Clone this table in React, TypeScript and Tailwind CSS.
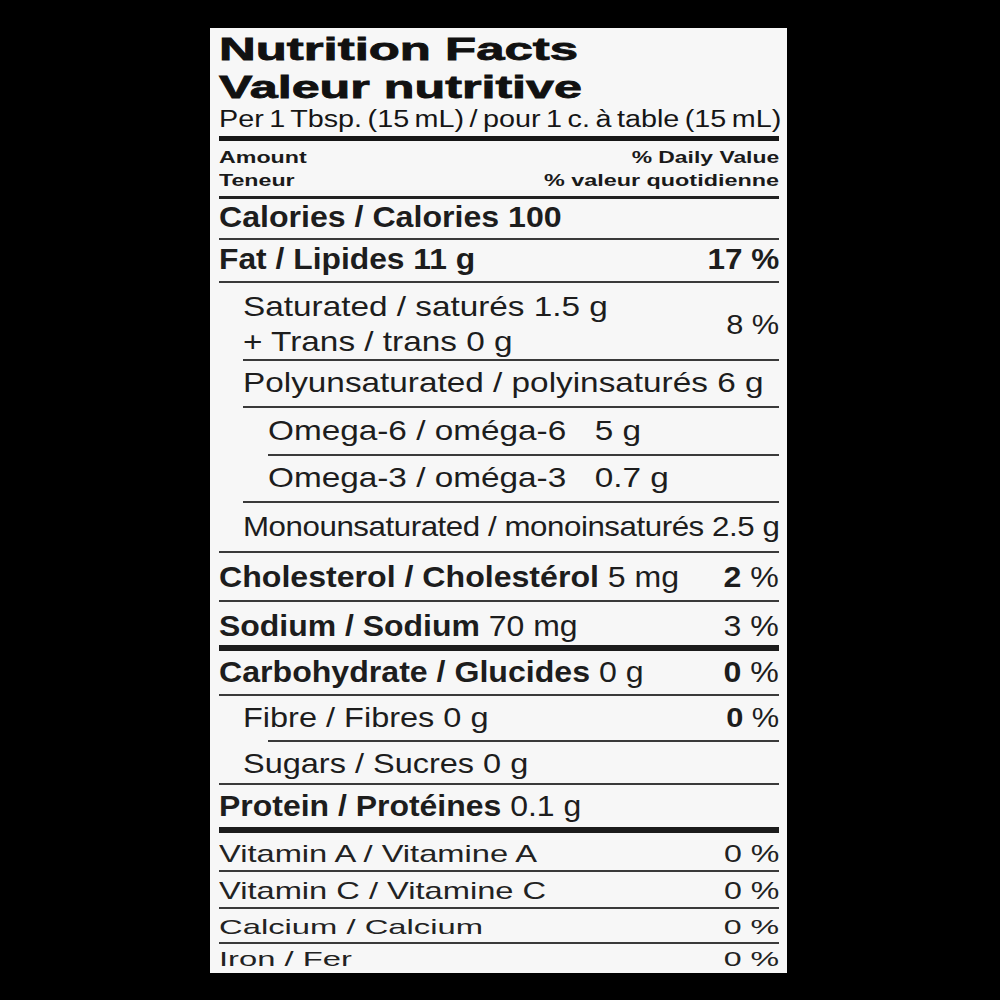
import type { ReactNode } from "react";

// thin divider between rows
function Rule({ className = "" }: { className?: string }) {
  return <div className={`h-[2px] shrink-0 bg-[#3a3a3a] ${className}`} />;
}

function Thick({ className = "" }: { className?: string }) {
  return <div className={`h-[6px] shrink-0 bg-[#1c1c1c] ${className}`} />;
}

// stretched label text, the print on the box is an extended face
function Wide({ scale, children }: { scale: string; children: ReactNode }) {
  return (
    <span className={`inline-block origin-left whitespace-nowrap ${scale}`}>
      {children}
    </span>
  );
}

function WideRight({ scale, children }: { scale: string; children: ReactNode }) {
  return (
    <span className={`inline-block origin-right whitespace-nowrap ${scale}`}>
      {children}
    </span>
  );
}

export default function App() {
  return (
    <div className="h-[1000px] w-[1000px] bg-black pl-[210px] pt-[28px] font-['Liberation_Sans',Arial,sans-serif] text-[#1d1d1d]">
      <div className="flex h-[945px] w-[577px] flex-col overflow-hidden bg-[#f7f7f7] pl-[9px] pr-[8px]">
        {/* Title */}
        <div className="pt-[2px] text-[32px] font-bold leading-[38px] text-[#111] [-webkit-text-stroke:0.8px_#111]">
          <div>
            <Wide scale="scale-x-[1.59]">Nutrition Facts</Wide>
          </div>
          <div>
            <Wide scale="scale-x-[1.57]">Valeur nutritive</Wide>
          </div>
        </div>
        <div className="text-[23px] leading-[26px] text-[#151515] [word-spacing:-2px]">
          <Wide scale="scale-x-[1.25]">Per 1 Tbsp. (15 mL) / pour 1 c. à table (15 mL)</Wide>
        </div>
        <div className="mt-[4px] h-[5px] shrink-0 bg-[#161616]" />

        {/* Amount / Daily value header */}
        <div className="flex h-[55px] shrink-0 justify-between pt-[5px] text-[16px] font-bold leading-[23px] text-[#1a1a1a]">
          <div>
            <div>
              <Wide scale="scale-x-[1.45]">Amount</Wide>
            </div>
            <div>
              <Wide scale="scale-x-[1.45]">Teneur</Wide>
            </div>
          </div>
          <div className="text-right">
            <div>
              <WideRight scale="scale-x-[1.43]">% Daily Value</WideRight>
            </div>
            <div>
              <WideRight scale="scale-x-[1.46]">% valeur quotidienne</WideRight>
            </div>
          </div>
        </div>
        <div className="h-[3px] shrink-0 bg-[#222]" />

        {/* Calories */}
        <div className="h-[39px] shrink-0 pt-[3px] text-[30px] font-bold leading-[30px]">
          <Wide scale="scale-x-[1.07]">Calories / Calories 100</Wide>
        </div>
        <Rule />

        {/* Fat */}
        <div className="flex h-[41px] shrink-0 justify-between pt-[4px] text-[30px] font-bold leading-[30px]">
          <Wide scale="scale-x-[1.06]">Fat / Lipides 11 g</Wide>
          <WideRight scale="scale-x-[1.05]">17 %</WideRight>
        </div>
        <Rule />

        {/* Saturated + Trans */}
        <div className="flex h-[76px] shrink-0 justify-between pl-[24px] pt-[6px] text-[28px] leading-[35px]">
          <div>
            <div>
              <Wide scale="scale-x-[1.19]">Saturated / saturés 1.5 g</Wide>
            </div>
            <div>
              <Wide scale="scale-x-[1.19]">+ Trans / trans 0 g</Wide>
            </div>
          </div>
          <div className="flex items-center">
            <WideRight scale="scale-x-[1.1]">8 %</WideRight>
          </div>
        </div>
        <Rule className="ml-[24px]" />

        {/* Polyunsaturated */}
        <div className="h-[45px] shrink-0 pl-[24px] pt-[8px] text-[28px] leading-[28px]">
          <Wide scale="scale-x-[1.19]">Polyunsaturated / polyinsaturés 6 g</Wide>
        </div>
        <Rule className="ml-[24px]" />

        {/* Omega-6 */}
        <div className="h-[46px] shrink-0 pl-[49px] pt-[9px] text-[28px] leading-[28px]">
          <Wide scale="scale-x-[1.19]">
            Omega-6 / oméga-6<span className="ml-[24px]">5 g</span>
          </Wide>
        </div>
        <Rule className="ml-[49px]" />

        {/* Omega-3 */}
        <div className="h-[45px] shrink-0 pl-[49px] pt-[8px] text-[28px] leading-[28px]">
          <Wide scale="scale-x-[1.19]">
            Omega-3 / oméga-3<span className="ml-[24px]">0.7 g</span>
          </Wide>
        </div>
        <Rule className="ml-[24px]" />

        {/* Monounsaturated */}
        <div className="h-[48px] shrink-0 pl-[24px] pt-[10px] text-[28px] leading-[28px] tracking-[-0.4px]">
          <Wide scale="scale-x-[1.117]">Monounsaturated / monoinsaturés 2.5 g</Wide>
        </div>
        <Rule />

        {/* Cholesterol */}
        <div className="flex h-[47px] shrink-0 justify-between pt-[9px] text-[30px] leading-[30px]">
          <Wide scale="scale-x-[1.07]">
            <span className="font-bold">Cholesterol / Cholestérol</span> 5 mg
          </Wide>
          <WideRight scale="scale-x-[1.07]">
            <span className="font-bold">2</span> %
          </WideRight>
        </div>
        <Rule />

        {/* Sodium */}
        <div className="flex h-[43px] shrink-0 justify-between pt-[9px] text-[30px] leading-[30px]">
          <Wide scale="scale-x-[1.065]">
            <span className="font-bold">Sodium / Sodium</span> 70 mg
          </Wide>
          <WideRight scale="scale-x-[1.07]">3 %</WideRight>
        </div>
        <Thick />

        {/* Carbohydrate */}
        <div className="flex h-[43px] shrink-0 justify-between pt-[6px] text-[30px] leading-[30px]">
          <Wide scale="scale-x-[1.07]">
            <span className="font-bold">Carbohydrate / Glucides</span> 0 g
          </Wide>
          <WideRight scale="scale-x-[1.07]">
            <span className="font-bold">0</span> %
          </WideRight>
        </div>
        <Rule />

        {/* Fibre */}
        <div className="flex h-[44px] shrink-0 justify-between pl-[24px] pt-[8px] text-[28px] leading-[28px]">
          <Wide scale="scale-x-[1.16]">Fibre / Fibres 0 g</Wide>
          <WideRight scale="scale-x-[1.1]">
            <span className="font-bold">0</span> %
          </WideRight>
        </div>
        <Rule className="ml-[49px]" />

        {/* Sugars */}
        <div className="h-[41px] shrink-0 pl-[24px] pt-[8px] text-[28px] leading-[28px]">
          <Wide scale="scale-x-[1.16]">Sugars / Sucres 0 g</Wide>
        </div>
        <Rule />

        {/* Protein */}
        <div className="h-[42px] shrink-0 pt-[6px] text-[30px] leading-[30px]">
          <Wide scale="scale-x-[1.065]">
            <span className="font-bold">Protein / Protéines</span> 0.1 g
          </Wide>
        </div>
        <Thick />

        {/* Vitamins and minerals */}
        <div className="flex h-[37px] shrink-0 justify-between pt-[9px] text-[24px] leading-[24px] text-[#222]">
          <Wide scale="scale-x-[1.36]">Vitamin A / Vitamine A</Wide>
          <WideRight scale="scale-x-[1.34]">0 %</WideRight>
        </div>
        <Rule />
        <div className="flex h-[35px] shrink-0 justify-between pt-[7px] text-[24px] leading-[24px] text-[#222]">
          <Wide scale="scale-x-[1.36]">Vitamin C / Vitamine C</Wide>
          <WideRight scale="scale-x-[1.34]">0 %</WideRight>
        </div>
        <Rule />
        <div className="flex h-[33px] shrink-0 justify-between pt-[7px] text-[21px] leading-[21px] text-[#222]">
          <Wide scale="scale-x-[1.56]">Calcium / Calcium</Wide>
          <WideRight scale="scale-x-[1.53]">0 %</WideRight>
        </div>
        <Rule />
        <div className="flex h-[29px] shrink-0 justify-between pt-[4px] text-[21px] leading-[21px] text-[#222]">
          <Wide scale="scale-x-[1.56]">Iron / Fer</Wide>
          <WideRight scale="scale-x-[1.53]">0 %</WideRight>
        </div>
      </div>
    </div>
  );
}
